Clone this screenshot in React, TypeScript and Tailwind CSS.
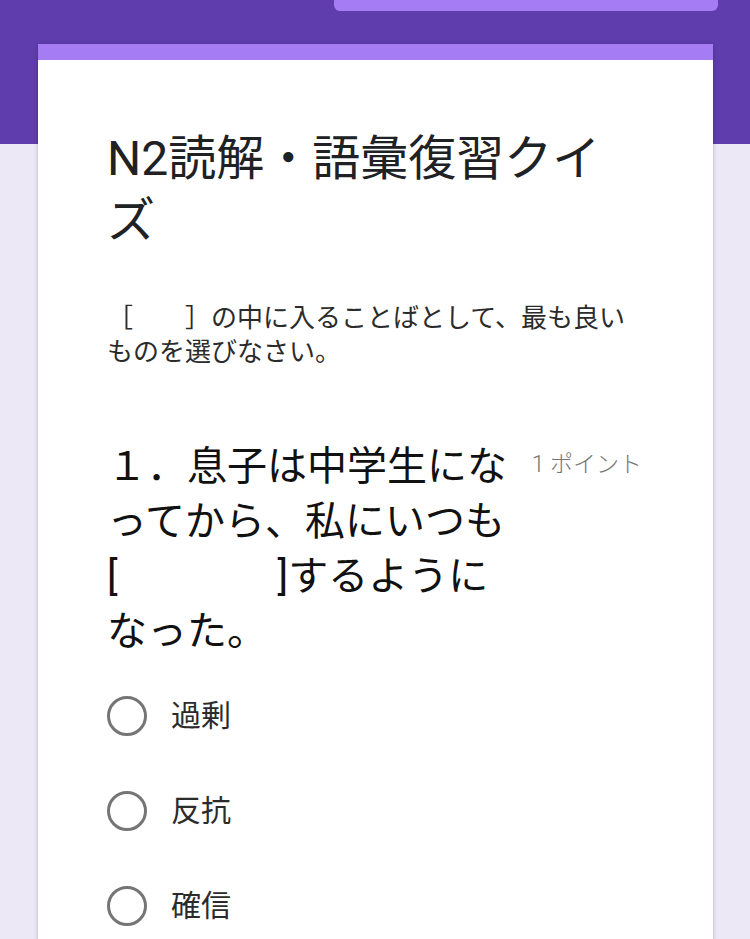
import React from 'react';

const options = ['過剰', '反抗', '確信'];

export default function App() {
  return (
    <div
      className="min-h-screen bg-[linear-gradient(#5f3dad_0_144px,#ede8f6_144px)] pb-10 text-[#202124]"
      style={{ fontFamily: 'Roboto, "Noto Sans CJK JP", sans-serif' }}
    >
      <div className="flex">
        <div className="ml-[334px] h-[11px] w-[384px] rounded-b-[6px] bg-[#a67cf4]" />
      </div>

      <div className="mx-[38px] mt-[33px] w-[675px] overflow-hidden bg-white shadow-[0_1px_4px_rgba(0,0,0,0.25)]">
        <div className="h-[16px] bg-[#a67cf4]" />
        <div className="pl-[69px] pr-[71px] pt-[68px] pb-[200px]">
          <h1 className="text-[48px] leading-[62px] font-normal">N2読解・語彙復習クイズ</h1>

          <p className="mt-[49px] text-[26px] leading-[34px] text-[#2b2b2b]">
            ［　　］の中に入ることばとして、最も良いものを選びなさい。
          </p>

          <div className="mt-[70px] flex items-start justify-between">
            <div className="w-[420px] text-[40px] leading-[55px] text-[#111]">
              １．息子は中学生になってから、私にいつも[　　　　]するようになった。
            </div>
            <div className="mt-[11px] shrink-0 pl-[16px] text-[23px] leading-[30px] font-light text-[#757575]">
              1 ポイント
            </div>
          </div>

          <div className="mt-[37px] flex flex-col gap-[55px]">
            {options.map((o) => (
              <label key={o} className="flex items-center gap-[24px]">
                <span className="h-[40px] w-[40px] rounded-full border-[3.5px] border-[#757575]" />
                <span className="text-[30px] leading-[40px] text-[#2b2b2b]">{o}</span>
              </label>
            ))}
          </div>
        </div>
      </div>
    </div>
  );
}
